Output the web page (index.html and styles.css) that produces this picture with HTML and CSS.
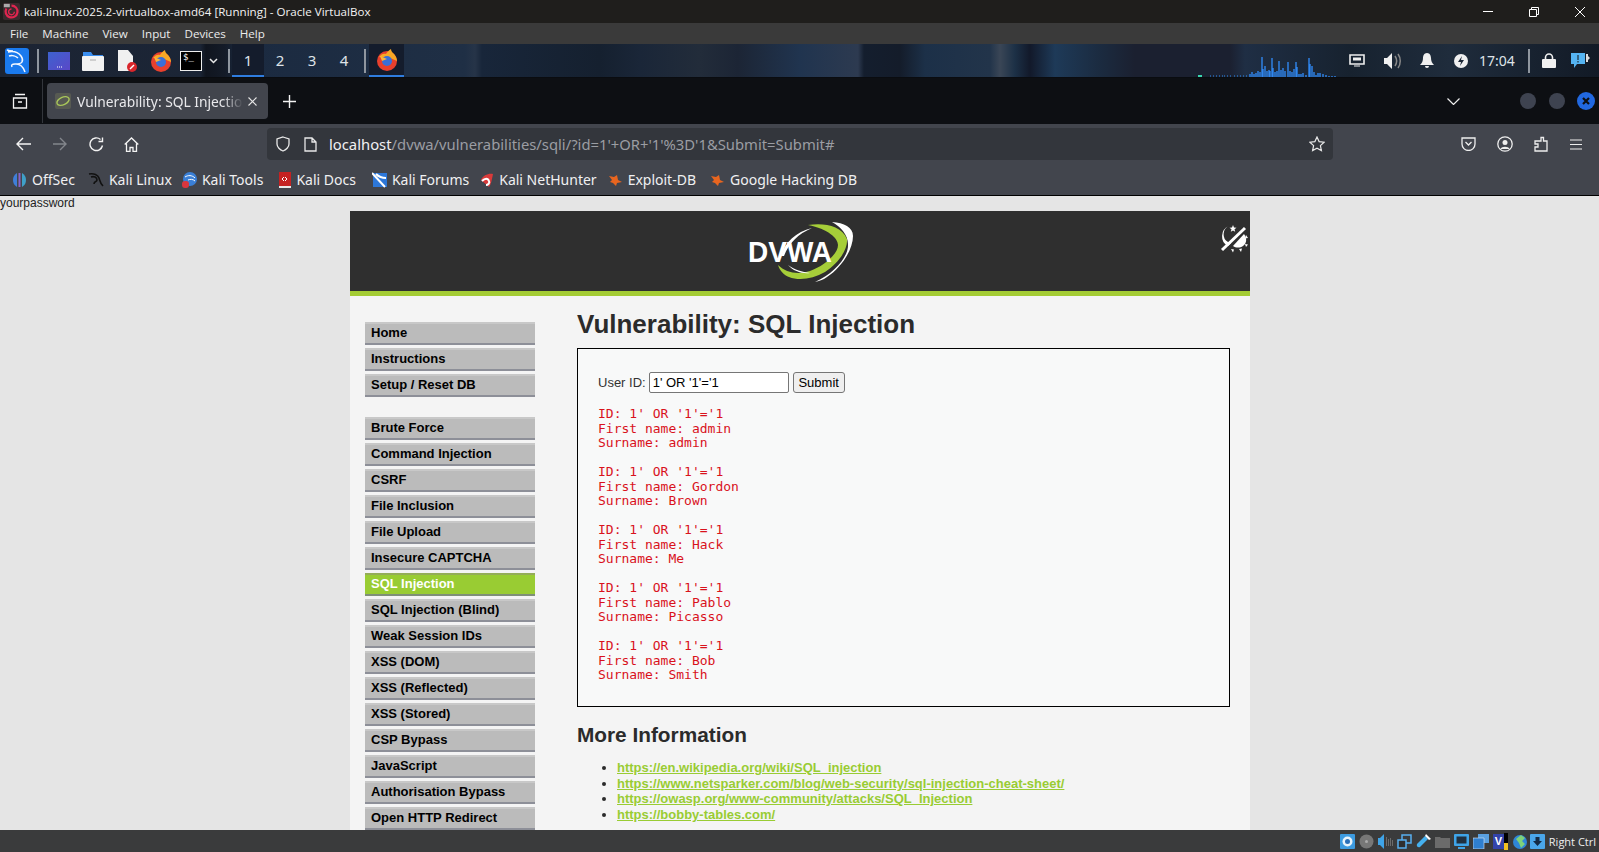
FILE: index.html
```html
<!DOCTYPE html>
<html lang="en">
<head>
<meta charset="utf-8">
<title>kali-linux-2025.2-virtualbox-amd64 [Running] - Oracle VirtualBox</title>
<link rel="stylesheet" href="styles.css">
</head>
<body>
<div class="vm">
  <header class="titlebar">
    <svg class="vbox-icon" width="17" height="17" viewBox="0 0 20 20"><rect width="20" height="20" rx="2" fill="#3a2a2e"/><path d="M10 3a7 7 0 1 1-6 3.5" fill="none" stroke="#e0254f" stroke-width="2.6"/><path d="M10 7a3.4 3.4 0 1 0 3.4 3.4" fill="none" stroke="#e0254f" stroke-width="1.6"/><rect x="1" y="1" width="7" height="4" fill="#aaa"/></svg>
    <span class="title-text">kali-linux-2025.2-virtualbox-amd64 [Running] - Oracle VirtualBox</span>
    <span class="grow"></span>
    <svg class="winctl" width="12" height="12" viewBox="0 0 12 12"><path d="M1 5.500h10" stroke="#fff"/></svg>
    <svg class="winctl" width="12" height="12" viewBox="0 0 12 12"><path d="M1.500 3.500h7v7h-7zM3.500 3.500v-2h7v7h-2" fill="none" stroke="#fff"/></svg>
    <svg class="winctl" width="12" height="12" viewBox="0 0 12 12"><path d="M1 1l10 10M11 1L1 11" stroke="#fff"/></svg>
  </header>
  <nav class="vmmenu"><span>File</span><span>Machine</span><span>View</span><span>Input</span><span>Devices</span><span>Help</span></nav>

  <div class="panel">
    <svg class="p-kali" width="24" height="26" viewBox="0 0 24 26"><rect width="24" height="26" rx="3" fill="#1a7aee"/><path d="M3 4c5-1 10 0 13 4 1.500 2 2 4 1 6-1 2-4 2-7 2-3 0-4 1-3 3M4 8c3-1 7 0 9 2M11 16c4 0 7 2 9 8M2 2c2 1 4 1 6 1" fill="none" stroke="#f4f8ff" stroke-width="1.500"/></svg>
    <i class="sep sep-a"></i>
    <svg class="p-desk" width="22" height="18" viewBox="0 0 22 18"><defs><linearGradient id="dg" x1="0" y1="0" x2="1" y2="1"><stop offset="0" stop-color="#3d62cf"/><stop offset="1" stop-color="#5a48c8"/></linearGradient></defs><rect width="22" height="18" fill="url(#dg)"/><path d="M9 15h1M11 15h1M13 15h1" stroke="#fff"/></svg>
    <svg class="p-folder" width="22" height="20" viewBox="0 0 22 20"><path d="M1 6V1h8l2 3h10v2z" fill="#3a8ef0"/><rect y="5" width="22" height="15" rx="1" fill="#f2f2f2"/><path d="M8 9h6" stroke="#aaa"/></svg>
    <svg class="p-doc" width="20" height="22" viewBox="0 0 20 22"><path d="M1 0h10l5 6v15H1z" fill="#f0f0f0"/><circle cx="15" cy="17" r="5" fill="#d9262c"/><path d="M13 19l4-4" stroke="#fff" stroke-width="1.500"/></svg>
    <svg class="p-fox" width="22" height="22" viewBox="0 0 22 22"><circle cx="11" cy="12" r="10" fill="#e8402d"/><path d="M3 8c2-3 5-4 7-3 1-2 3-4 5-5 0 2 1 3 3 5 2 2 3 5 3 7l-7-3z" fill="#f9a825"/><circle cx="11" cy="12" r="5" fill="#3a6fd8"/><path d="M4 7l7 3-5 2z" fill="#fbb43a"/></svg>
    <span class="p-term">$_</span>
    <svg class="p-chev" width="9" height="6" viewBox="0 0 9 6"><path d="M1 1l3.500 3.500L8 1" fill="none" stroke="#e8e8e8" stroke-width="1.500"/></svg>
    <i class="sep sep-b"></i>
    <span class="ws ws-on">1</span><span class="ws">2</span><span class="ws">3</span><span class="ws">4</span>
    <i class="sep sep-c"></i>
    <span class="task"><svg width="22" height="22" viewBox="0 0 22 22"><circle cx="11" cy="12" r="10" fill="#e8402d"/><path d="M3 8c2-3 5-4 7-3 1-2 3-4 5-5 0 2 1 3 3 5 2 2 3 5 3 7l-7-3z" fill="#f9a825"/><circle cx="11" cy="12" r="5" fill="#3a6fd8"/><path d="M4 7l7 3-5 2z" fill="#fbb43a"/></svg></span>
    <span class="grow"></span>
    <svg class="spectro" width="140" height="21" viewBox="0 0 140 21"><path d="M0 20h4" stroke="#3ad6b0" stroke-width="2"/><path d="M12 20h1M15 20h1M18 20h1M21 20h1M24 20h1M26 20h1M29 20h1M32 20h1M36 20h1M39 20h1M42 20h1M45 20h1M48 20h1" stroke="#2f8cf0"/><path d="M52 21v-3M54 21v-5M56 21v-3M58 21v-4M60 21v-6M62 21v-5M64 21v-20M65 21v-8M67 21v-11M69 21v-6M71 21v-7M72 21v-6M74 21v-19M75 21v-9M77 21v-5M79 21v-6M81 21v-16M83 21v-7M85 21v-9M87 21v-6M90 21v-15M92 21v-6M94 21v-5M96 21v-8M98 21v-15M99 21v-10M101 21v-3M103 21v-3M105 21v-4M108 21v-2M111 21v-19M112 21v-13M114 21v-11M116 21v-5M118 21v-2M120 21v-4M122 21v-4M125 21v-3M128 21v-2M131 21v-1M134 21v-1M137 21v-1" stroke="#2f86ee" stroke-width="1.400"/></svg>
    <svg class="t-net" width="16" height="13" viewBox="0 0 16 13"><path d="M1 1h14v9H1z" fill="none" stroke="#eee" stroke-width="1.600"/><path d="M4 3.500h8v3H4z" fill="#eee"/><path d="M5 12h6" stroke="#eee"/></svg>
    <svg class="t-vol" width="18" height="16" viewBox="0 0 18 16"><path d="M0 5h3l5-5v16l-5-5H0z" fill="#f0f0f0"/><path d="M11 3c2 3 2 7 0 10M14 1c3 4 3 10 0 14" fill="none" stroke="#888" stroke-width="1.500"/></svg>
    <svg class="t-bell" width="14" height="15" viewBox="0 0 14 15"><path d="M7 0c3 0 4 3 4 5 0 3 1 5 3 7H0c2-2 3-4 3-7 0-2 1-5 4-5zM5 13h4a2 2 0 0 1-4 0z" fill="#f0f0f0"/></svg>
    <svg class="t-bolt" width="14" height="14" viewBox="0 0 14 14"><circle cx="7" cy="7" r="7" fill="#f0f0f0"/><path d="M8 2L4 8h3l-1 4 4-6H7z" fill="#1b2635"/></svg>
    <span class="clock">17:04</span>
    <i class="sep sep-d"></i>
    <svg class="t-lock" width="14" height="15" viewBox="0 0 14 15"><path d="M3.500 7V4.500a3.500 3.500 0 0 1 7 0V7" fill="none" stroke="#f0f0f0" stroke-width="1.600"/><rect y="6" width="14" height="9" rx="1" fill="#f0f0f0"/></svg>
    <svg class="t-chat" width="20" height="17" viewBox="0 0 20 17"><path d="M0 1h14v11H6l-3 4v-4H0z" fill="#55b4f2"/><path d="M7 3v5M7 9v1.500" stroke="#111" stroke-width="1"/><path d="M15 2h2v2l2 2-2 2v2h-2z" fill="#ddd"/></svg>
  </div>

  <div class="tabbar">
    <svg class="tabs-ico" width="16" height="16" viewBox="0 0 16 16"><path d="M3 1.500h10M1.500 5h13v10h-13zM6 9h4" fill="none" stroke="#f5f5f5" stroke-width="1.300"/></svg>
    <i class="tabsep"></i>
    <div class="tab">
      <svg class="fav" width="16" height="16" viewBox="0 0 16 16"><rect width="16" height="16" rx="2" fill="#575a52"/><ellipse cx="8" cy="8" rx="6.500" ry="3.800" fill="none" stroke="#a9c75a" stroke-width="1.400" transform="rotate(-25 8 8)"/></svg>
      <span class="tab-title">Vulnerability: SQL Injection</span>
      <svg class="tab-x" width="9" height="9" viewBox="0 0 9 9"><path d="M.5.500l8 8M8.500.500l-8 8" stroke="#e6e6e6" stroke-width="1.100"/></svg>
    </div>
    <svg class="plus" width="13" height="13" viewBox="0 0 13 13"><path d="M6.500 0v13M0 6.500h13" stroke="#f3f3f3" stroke-width="1.400"/></svg>
    <span class="grow"></span>
    <svg class="tabs-chev" width="13" height="7" viewBox="0 0 13 7"><path d="M.5.500l6 6 6-6" fill="none" stroke="#eee" stroke-width="1.200"/></svg>
    <i class="dot"></i><i class="dot dot-b"></i>
    <svg class="dot-x" width="18" height="18" viewBox="0 0 18 18"><circle cx="9" cy="9" r="9" fill="#2168e0"/><path d="M6 6l6 6M12 6l-6 6" stroke="#0d0f13" stroke-width="2.200"/></svg>
  </div>

  <div class="navbar">
    <svg class="n-back" width="16" height="14" viewBox="0 0 16 14"><path d="M15 7H1.500M7 1L1 7l6 6" fill="none" stroke="#f3f3f3" stroke-width="1.400"/></svg>
    <svg class="n-fwd" width="14" height="14" viewBox="0 0 14 14"><path d="M0 7h12.500M7 1l6 6-6 6" fill="none" stroke="#83868c" stroke-width="1.400"/></svg>
    <svg class="n-rel" width="15" height="15" viewBox="0 0 15 15"><path d="M13.500 8.500A6.300 6.300 0 1 1 11.500 2.500M13.500 .5v4h-4" fill="none" stroke="#f3f3f3" stroke-width="1.400"/></svg>
    <svg class="n-home" width="15" height="15" viewBox="0 0 15 15"><path d="M.7 7.500L7.500 1l6.800 6.500M2.500 6.500v8h3.500v-4h3v4h3.500v-8" fill="none" stroke="#f3f3f3" stroke-width="1.300"/></svg>
    <div class="urlbar">
      <svg class="u-shield" width="14" height="16" viewBox="0 0 14 16"><path d="M7 1l6 2v5c0 3-3 6-6 7-3-1-6-4-6-7V3z" fill="none" stroke="#e8e8e8" stroke-width="1.300"/></svg>
      <svg class="u-page" width="13" height="15" viewBox="0 0 13 15"><path d="M1 1h7l4 4v9H1zM8 1v4h4" fill="none" stroke="#e8e8e8" stroke-width="1.300"/></svg>
      <span class="url"><b class="host">localhost</b>/dvwa/vulnerabilities/sqli/?id=1'+OR+'1'%3D'1&amp;Submit=Submit#</span>
      <span class="grow"></span>
      <svg class="u-star" width="16" height="16" viewBox="0 0 16 16"><path d="M8 1l2.100 4.600 5 .6-3.700 3.400 1 5L8 12.200 3.600 14.600l1-5L.9 6.200l5-.6z" fill="none" stroke="#e8e8e8" stroke-width="1.200"/></svg>
    </div>
    <span class="grow"></span>
    <svg class="n-pocket" width="15" height="14" viewBox="0 0 15 14"><path d="M1 1h13v6a6.500 6.500 0 0 1-13 0z" fill="none" stroke="#eee" stroke-width="1.300"/><path d="M4.500 5l3 3 3-3" fill="none" stroke="#eee" stroke-width="1.300"/></svg>
    <svg class="n-acct" width="16" height="16" viewBox="0 0 16 16"><circle cx="8" cy="8" r="7.200" fill="none" stroke="#eee" stroke-width="1.300"/><circle cx="8" cy="6.500" r="2.500" fill="#eee"/><path d="M3.500 13c1-3 8-3 9 0z" fill="#eee"/></svg>
    <svg class="n-ext" width="14" height="16" viewBox="0 0 14 16"><path d="M7 1.500h2.500V5H13v10H1v-4h3V8H1V5h6z" fill="none" stroke="#eee" stroke-width="1.300"/></svg>
    <svg class="n-menu" width="12" height="11" viewBox="0 0 12 11"><path d="M0 1h12M0 5.500h12M0 10h12" stroke="#eee" stroke-width="1.200"/></svg>
  </div>

  <div class="bookmarks">
    <a class="bm bm-1"><svg width="15" height="16" viewBox="0 0 15 16"><path d="M5 1C2 3 1 5 1 8s1 5 4 7z" fill="#3f7fd8"/><path d="M6.500 1h2v14h-2z" fill="#8a62c8"/><path d="M10 1c3 2 4 4 4 7s-1 5-4 7z" fill="#3fa0c8"/></svg>OffSec</a>
    <a class="bm bm-2"><svg width="16" height="16" viewBox="0 0 16 16"><path d="M1 2c5-1 9 1 10 4 1 3 1 5 4 8M3 5c3-1 6 0 6 3 0 2-3 1-3 4" fill="none" stroke="#111" stroke-width="1.600"/></svg>Kali Linux</a>
    <a class="bm bm-3"><svg width="15" height="16" viewBox="0 0 15 16"><circle cx="8" cy="7" r="7" fill="#3a7fd6"/><path d="M3 5c3-2 7-2 10 1M6 8c2-1 5-1 7 1" fill="none" stroke="#fff"/><rect y="9" width="7" height="7" rx="3" fill="#d9363e"/></svg>Kali Tools</a>
    <a class="bm bm-4"><svg width="13" height="16" viewBox="0 0 13 16"><path d="M1 0h12v14H1z" fill="#c42222"/><path d="M1 14h12v2H1z" fill="#e8e8e8"/><path d="M4 7l2-2M4 7l2 2M9 7L7 5M9 7L7 9" stroke="#fff"/></svg>Kali Docs</a>
    <a class="bm bm-5"><svg width="15" height="16" viewBox="0 0 15 16"><path d="M1 1h14v14H1z" fill="#2d77d8"/><path d="M0 1l13 14M4 2c3 3 7 4 10 4" stroke="#fff" stroke-width="2" fill="none"/></svg>Kali Forums</a>
    <a class="bm bm-6"><svg width="15" height="16" viewBox="0 0 15 16"><path d="M2 8c2-5 8-7 12-6-1 5-2 11-4 13z" fill="#d93a3a"/><path d="M3 9c3-3 6-3 7 0 1 2-1 4-3 4" fill="none" stroke="#fff" stroke-width="2"/></svg>Kali NetHunter</a>
    <a class="bm bm-7"><svg width="13" height="14" viewBox="0 0 13 14"><path d="M0 3l5 1 3-2 1 5 4 2-5 1-1 3-3-3-3-1 2-2z" fill="#e8651f"/></svg>Exploit-DB</a>
    <a class="bm bm-8"><svg width="13" height="14" viewBox="0 0 13 14"><path d="M0 3l5 1 3-2 1 5 4 2-5 1-1 3-3-3-3-1 2-2z" fill="#e8651f"/></svg>Google Hacking DB</a>
  </div>

  <main class="page">
    <div class="leak">yourpassword</div>
    <div class="container">
      <div class="dv-header">
        <svg class="logo" width="106" height="62" viewBox="0 0 106 62">
          <path d="M84 0C96 1 105 5 105 14c0 14-12 32-26 41-4 3-8 4-12 5 20-9 34-26 33-38 0-9-7-17-16-22z" fill="#fff"/>
          <path d="M60 3c16-2 33 0 39 14 1 10-8 24-22 33-12 7-26 9-36 5-5-2-9-6-11-12 8 8 20 10 32 6 14-5 28-17 28-26 0-7-10-16-30-20z" fill="#a6ce39"/>
          <path d="M33 34C37 20 48 10 64 6 50 12 41 21 36 34z" fill="#fff"/>
          <path d="M40 43c7 5 14 7 22 8-8 1-17-2-22-8z" fill="#fff"/>
          <text class="logo-text" x="0" y="40" textLength="84" lengthAdjust="spacingAndGlyphs">DVWA</text>
        </svg>
        <svg class="theme" width="28" height="30" viewBox="0 0 28 30">
          <path d="M9 3a9 9 0 0 0-1 16c1 .5 2 .8 3 1l-3 3A11 11 0 0 1 9 3z" fill="#fff"/>
          <path d="M13 2l1 2.500 2.500.2-2 1.600.7 2.500-2.200-1.400-2.200 1.400.7-2.500-2-1.600 2.500-.2z" fill="#fff"/>
          <path d="M2 27L25 5" stroke="#fff" stroke-width="3"/>
          <path d="M24 11c3 4 3 9-1 12-3 2-7 2-10 0z" fill="#fff"/>
          <path d="M11 26l3 .5-1 3zM19 26l3-.5-1 3.500zM25 21l3 .500-2 2.500zM26 12l2 3-3 .500z" fill="#fff"/>
        </svg>
      </div>
      <div class="dv-body">
        <aside class="side">
          <ul class="menu">
            <li>Home</li><li>Instructions</li><li>Setup / Reset DB</li>
          </ul>
          <ul class="menu">
            <li>Brute Force</li><li>Command Injection</li><li>CSRF</li><li>File Inclusion</li><li>File Upload</li><li>Insecure CAPTCHA</li><li class="on">SQL Injection</li><li>SQL Injection (Blind)</li><li>Weak Session IDs</li><li>XSS (DOM)</li><li>XSS (Reflected)</li><li>XSS (Stored)</li><li>CSP Bypass</li><li>JavaScript</li><li>Authorisation Bypass</li><li>Open HTTP Redirect</li>
          </ul>
        </aside>
        <section class="content">
          <h1>Vulnerability: SQL Injection</h1>
          <div class="box">
            <form class="uform">
              <label>User ID:</label>
              <input class="uinput" type="text" value="1' OR '1'='1">
              <button class="ubtn" type="button">Submit</button>
            </form>
            <pre>ID: 1' OR '1'='1
First name: admin
Surname: admin</pre>
            <pre>ID: 1' OR '1'='1
First name: Gordon
Surname: Brown</pre>
            <pre>ID: 1' OR '1'='1
First name: Hack
Surname: Me</pre>
            <pre>ID: 1' OR '1'='1
First name: Pablo
Surname: Picasso</pre>
            <pre>ID: 1' OR '1'='1
First name: Bob
Surname: Smith</pre>
          </div>
          <h2>More Information</h2>
          <ul class="links">
            <li><a>https://en.wikipedia.org/wiki/SQL_injection</a></li>
            <li><a>https://www.netsparker.com/blog/web-security/sql-injection-cheat-sheet/</a></li>
            <li><a>https://owasp.org/www-community/attacks/SQL_Injection</a></li>
            <li><a>https://bobby-tables.com/</a></li>
          </ul>
        </section>
      </div>
    </div>
  </main>

  <footer class="statusbar">
    <svg width="15" height="15" viewBox="0 0 15 15"><rect width="15" height="15" rx="1" fill="#3d9be0"/><circle cx="7.500" cy="7.500" r="5" fill="#e8f3fb"/><circle cx="7.500" cy="7.500" r="2.500" fill="#2a6fb8"/></svg>
    <svg width="15" height="15" viewBox="0 0 15 15"><circle cx="7.500" cy="7.500" r="7" fill="#777"/><circle cx="7.500" cy="7.500" r="1.500" fill="#aaa"/></svg>
    <svg width="15" height="15" viewBox="0 0 15 15"><path d="M0 4h2l4-4v15l-4-4H0z" fill="#3fa4e8"/><path d="M8 3h1v9H8zM10 5h1v7h-1zM12 4h1v8h-1zM14 6h1v6h-1z" fill="#6c6c6c"/></svg>
    <svg width="15" height="15" viewBox="0 0 15 15"><path d="M5 1h9v8H5z" fill="none" stroke="#58b0f0" stroke-width="1.500"/><path d="M1 6h8v8H1z" fill="#2f2f2f" stroke="#58b0f0" stroke-width="1.500"/></svg>
    <svg width="15" height="15" viewBox="0 0 15 15"><path d="M1 10l8-8 3 3-8 8c-2 1-4-1-3-3z" fill="#45b0ee"/><path d="M10 0l5 5-2 1-4-4z" fill="#fff"/></svg>
    <svg width="15" height="15" viewBox="0 0 15 15"><path d="M0 3h5l1 1h9v10H0z" fill="#6b6b6b"/></svg>
    <svg width="15" height="15" viewBox="0 0 15 15"><rect width="15" height="12" rx="1" fill="#3fa4e8"/><rect x="2.500" y="2.500" width="10" height="7" fill="#203040"/><path d="M4 14h7" stroke="#3fa4e8" stroke-width="2"/></svg>
    <svg width="16" height="15" viewBox="0 0 16 15"><path d="M5 0h11v9H5z" fill="#5aa0e0"/><path d="M0 4h11v11H0z" fill="#2f7fd0" stroke="#dfe9f3" stroke-width=".6"/></svg>
    <span class="st-v">V</span>
    <i class="st-bar"></i>
    <svg width="16" height="15" viewBox="0 0 16 15"><circle cx="8" cy="8" r="7" fill="#2f86d8"/><path d="M4 5l5-4 4 3-3 3 3 3-4 4-2-5z" fill="#7ed27a"/></svg>
    <svg class="st-arrow" width="15" height="15" viewBox="0 0 15 15"><rect width="15" height="15" rx="1" fill="#4aa6ea"/><path d="M5.500 3h4v4h2.500l-4.500 5-4.500-5h2.500z" fill="#142a44"/></svg>
    <span class="st-key">Right Ctrl</span>
  </footer>
</div>
</body>
</html>
```

FILE: styles.css
```css
* { box-sizing: border-box; }
html, body { margin: 0; padding: 0; height: 100%; overflow: hidden; }
ul { margin: 0; padding: 0; list-style: none; }
svg { display: block; flex: none; }
i { display: block; flex: none; }
.grow { flex: 1; }
.vm { width: 1599px; height: 852px; display: flex; flex-direction: column; font-family: "Noto Sans", sans-serif; }

.titlebar { height: 23px; background: #1f1e1c; color: #f2f2f2; display: flex; align-items: center; padding-left: 3px; font-family: "Open Sans", sans-serif; font-size: 11.600px; }
.title-text { margin-left: 4px; }
.winctl { margin-right: 34px; }
.winctl:last-child { margin-right: 13px; }

.vmmenu { height: 21px; background: #3a3a3a; color: #ececec; display: flex; align-items: center; padding-left: 10px; gap: 14px; font-family: "Open Sans", sans-serif; font-size: 11.600px; }

.panel { height: 34px; border-bottom: 1px solid #0a0c10; display: flex; align-items: center; padding-left: 5px; color: #dfe3e8; background: linear-gradient(90deg, #1c2433 0, #1b2536 200px, #10151f 206px, #141b28 225px, #1b2a40 240px, #1f2f45 465px, #263448 475px, #18263a 482px, #15202f 600px, #1a2638 640px, #222c3a 700px, #1c2535 738px, #20344f 800px, #2d3a50 858px, #141e2e 864px, #141c2a 900px, #1c3048 925px, #22344a 990px, #3a4656 1000px, #1c3046 1015px, #12192a 1030px, #1e3a58 1055px, #1b2b40 1100px, #1b2030 1135px, #1b2030 1230px, #1f2e44 1245px, #17222f 1350px, #1f2c3c 1450px, #121a26 1599px); }
.sep { width: 2px; height: 24px; background: #8f969f; }
.sep-a { margin-left: 8px; }
.p-desk { margin-left: 9px; }
.p-folder { margin-left: 12px; }
.p-doc { margin-left: 13px; }
.p-fox { margin-left: 13px; }
.p-term { width: 22px; height: 20px; margin-left: 8px; background: #000; border: 1px solid #eee; color: #fff; font: 9px/10px "DejaVu Sans Mono", monospace; padding-left: 2px; }
.p-chev { margin-left: 7px; }
.sep-b { margin-left: 10px; }
.ws { width: 32px; height: 33px; line-height: 33px; text-align: center; font-size: 15px; }
.ws-on { margin-left: 2px; border-bottom: 2px solid #2f7de0; background: #141c2c; }
.sep-c { margin-left: 4px; }
.task { width: 35px; height: 33px; margin-left: 3px; display: flex; justify-content: center; align-items: center; border-bottom: 2px solid #2f7de0; background: #141c2c; }
.spectro { align-self: flex-end; }
.t-net { margin-left: 11px; }
.t-vol { margin-left: 19px; }
.t-bell { margin-left: 18px; }
.t-bolt { margin-left: 20px; }
.clock { margin-left: 11px; font-size: 14px; width: 36px; white-space: nowrap; }
.sep-d { margin-left: 13px; }
.t-lock { margin-left: 12px; }
.t-chat { margin-left: 15px; margin-right: 8px; }

.tabbar { height: 46px; background: #0d0f13; display: flex; align-items: center; padding-left: 12px; }
.tabsep { width: 1px; height: 44px; background: #33363c; margin-left: 14px; }
.tab { width: 221px; height: 36px; margin-left: 4px; background: #42454d; border-radius: 4px; display: flex; align-items: center; padding-left: 8px; color: #e9e9ec; }
.tab-title { width: 166px; margin-left: 6px; font-size: 13.800px; white-space: nowrap; overflow: hidden; -webkit-mask-image: linear-gradient(90deg, #000 88%, transparent); mask-image: linear-gradient(90deg, #000 88%, transparent); }
.tab-x { margin-left: 5px; }
.plus { margin-left: 15px; }
.tabs-chev { margin-right: 60px; }
.dot { width: 16px; height: 16px; border-radius: 50%; background: #3e4350; margin-right: 13px; }
.dot-b { margin-right: 12px; }
.dot-x { margin-right: 4px; }

.navbar { height: 40px; background: #42454d; display: flex; align-items: center; padding-left: 16px; }
.n-fwd { margin-left: 21px; }
.n-rel { margin-left: 22px; }
.n-home { margin-left: 20px; }
.urlbar { width: 1066px; height: 32px; margin-left: 128px; background: #33363c; border-radius: 4px; display: flex; align-items: center; padding: 0 8px 0 9px; }
.u-page { margin-left: 14px; }
.url { margin-left: 12px; font-size: 14.800px; color: #9b9da3; white-space: nowrap; }
.host { font-weight: 400; color: #f0f0f2; }
.n-pocket { margin-right: 21px; }
.n-acct { margin-right: 21px; }
.n-ext { margin-right: 22px; }
.n-menu { margin-right: 17px; }

.bookmarks { height: 32px; background: #42454d; border-bottom: 1px solid #000; display: flex; align-items: center; padding-left: 12px; color: #f0f0f2; font-size: 14px; }
.bm { display: flex; align-items: center; gap: 5px; white-space: nowrap; }
.bm-2 { margin-left: 13px; }
.bm-3 { margin-left: 10px; }
.bm-4 { margin-left: 15px; }
.bm-5 { margin-left: 16px; }
.bm-6 { margin-left: 10px; }
.bm-7 { margin-left: 12px; gap: 6px; }
.bm-8 { margin-left: 15px; gap: 6px; }

.page { flex: 1; min-height: 0; overflow: hidden; background: #e5e5e5; font-family: "Liberation Sans", Arial, sans-serif; color: #2b2b2b; }
.leak { height: 15px; font-size: 12px; line-height: 15px; color: #222; }
.container { width: 900px; margin-left: 350px; background: #f4f4f4; }
.dv-header { height: 85px; background: #2f2f2f; border-bottom: 5px solid #a4cc34; position: relative; display: flex; justify-content: center; padding: 11px 0 0 1px; }
.logo-text { font: 700 30px "Liberation Sans", Arial, sans-serif; fill: #fff; }
.theme { position: absolute; right: 2px; top: 12px; }
.dv-body { display: flex; }
.side { width: 185px; padding: 26px 0 0 15px; flex: none; }
.menu { margin-bottom: 20px; }
.menu li { width: 170px; height: 23px; margin-bottom: 3px; background: #bbb; border-top: 2px solid #c8c8c8; border-bottom: 2px solid #8d8f98; padding-left: 6px; font-size: 13px; font-weight: 700; line-height: 18px; color: #000; }
.menu li.on { background: #9c3; border-top-color: #94ac58; border-bottom-color: #7f8f78; color: #fff; }
.content { width: 653px; margin-left: 42px; }
h1 { margin: 11px 0 7px; font-size: 26px; line-height: 34px; font-weight: 700; color: #2b2b2b; }
.box { height: 359px; background: #f8f9f9; border: 1px solid #000; padding: 23px 20px 0; }
.uform { display: flex; align-items: center; height: 21px; font-size: 13px; color: #333; margin-bottom: 14px; }
.uform label { margin-right: 3px; }
.uinput { width: 140px; height: 21px; padding: 1px 3px; margin: 0 4px 0 0; border: 1px solid #767676; border-radius: 2px; background: #fff; font: 13px "Liberation Sans", Arial, sans-serif; color: #000; }
.ubtn { width: 52px; height: 21px; padding: 0; border: 1px solid #767676; border-radius: 3px; background: #efefef; font: 13px "Liberation Sans", Arial, sans-serif; color: #000; }
pre { margin: 0 0 14.500px; font: 13px/14.500px "DejaVu Sans Mono", monospace; color: #d9121c; }
h2 { margin: 16px 0 13px; font-size: 20.800px; line-height: 24px; font-weight: 700; color: #2b2b2b; }
.links { list-style: disc; padding-left: 40px; font-size: 13px; line-height: 15.700px; font-weight: 700; }
.links a { color: #9c3; text-decoration: underline; }

.statusbar { height: 22px; background: #3a3b3c; display: flex; align-items: center; justify-content: flex-end; gap: 4px; padding-right: 3px; color: #eee; font-family: "Open Sans", sans-serif; font-size: 11px; }
.st-v { width: 11px; height: 15px; background: #3344aa; color: #fff; font: 700 11px/15px "Liberation Sans", sans-serif; text-align: center; }
.st-bar { width: 4px; height: 17px; margin-left: -4px; background: linear-gradient(#000 60%, #f0c020 60%); }
.st-arrow { margin-left: -2px; }
```
